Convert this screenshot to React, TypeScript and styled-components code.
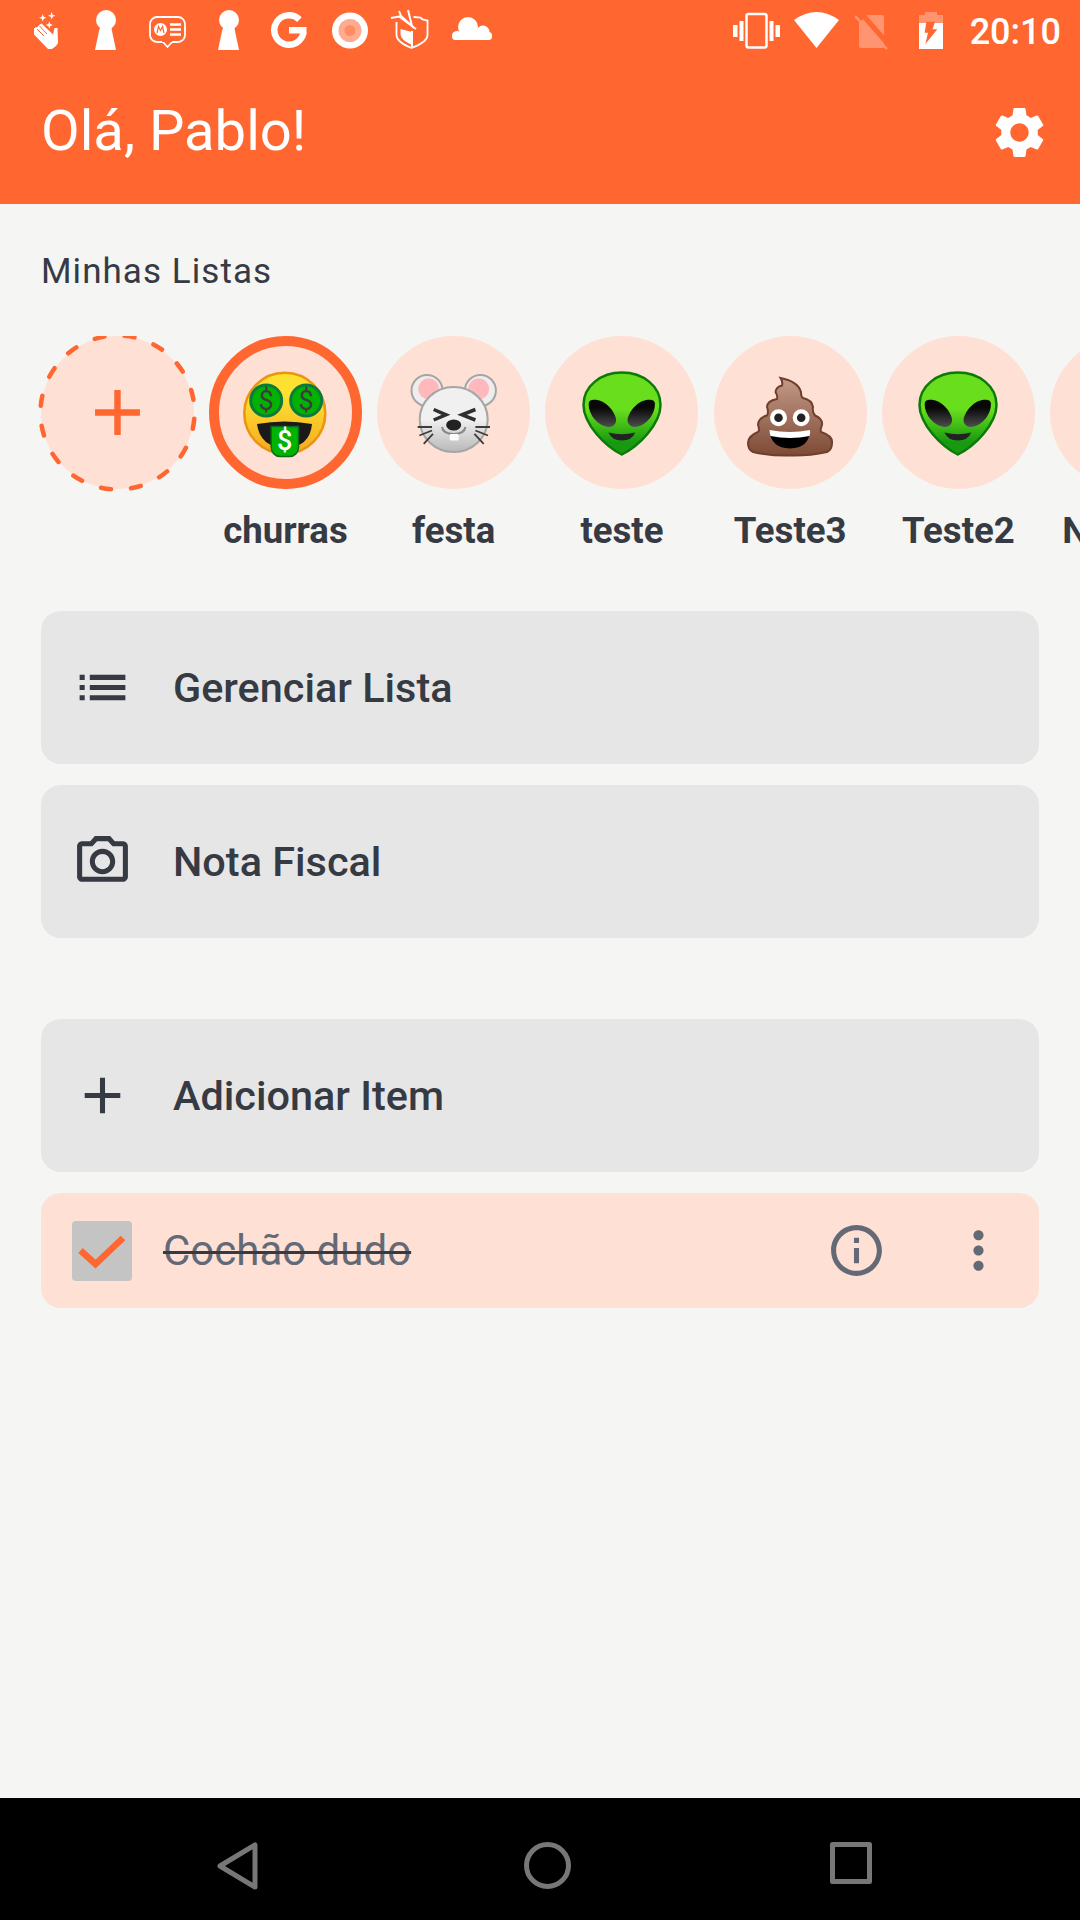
import React from "react";
import styled, { createGlobalStyle } from "styled-components";
import { MdSettings, MdList, MdOutlinePhotoCamera, MdAdd, MdInfoOutline, MdMoreVert } from "react-icons/md";

const Global = createGlobalStyle`
  html, body { margin: 0; padding: 0; background: #f5f5f3; }
  * { box-sizing: border-box; }
`;

const Page = styled.div`
  width: 1080px;
  height: 1920px;
  display: flex;
  flex-direction: column;
  overflow: hidden;
  background: #f5f5f3;
  font-family: Roboto, "Liberation Sans", sans-serif;
  color: #363a43;
`;

const Header = styled.header`
  height: 204px;
  flex: none;
  display: flex;
  flex-direction: column;
  background: #ff6630;
  color: #fff;
`;

const StatusBar = styled.div`
  height: 61px;
  flex: none;
  display: flex;
  justify-content: space-between;
  align-items: flex-start;
  padding: 9px 19px 0 34px;
`;

const StatusGroup = styled.div`
  display: flex;
  align-items: flex-start;
`;

const StatusIcon = styled.svg<{ $gap?: number }>`
  display: block;
  flex: none;
  height: 42px;
  margin-left: ${(p) => p.$gap ?? 0}px;
`;

const Clock = styled.span`
  margin: 2px 0 0 27px;
  font-size: 36px;
  font-weight: 500;
  line-height: 42px;
`;

const AppBar = styled.div`
  flex: 1;
  display: flex;
  align-items: center;
  justify-content: space-between;
  padding: 0 30px 4px 41px;
`;

const Title = styled.h1`
  margin: 0;
  font-size: 56.2px;
  font-weight: 400;
  line-height: 66px;
`;

const Main = styled.main`
  flex: 1;
  display: flex;
  flex-direction: column;
  min-height: 0;
`;

const SectionLabel = styled.div`
  margin: 49px 0 0 41px;
  font-size: 35px;
  line-height: 38px;
  letter-spacing: 1.05px;
`;

const ListRow = styled.div`
  display: flex;
  gap: 15.25px;
  margin-top: 45px;
  padding-left: 40.7px;
  overflow: hidden;
`;

const ListItem = styled.div`
  flex: none;
  width: 153px;
  display: flex;
  flex-direction: column;
  align-items: center;
  gap: 20px;
`;

const Bubble = styled.div<{ $selected?: boolean }>`
  position: relative;
  flex: none;
  width: 153px;
  height: 153px;
  display: flex;
  align-items: center;
  justify-content: center;
  border-radius: 50%;
  background: #ffe0d5;
  color: #ff6630;
  border: ${(p) => (p.$selected ? "10px solid #ff6630" : "none")};
`;

const DashedRing = styled.svg`
  position: absolute;
  left: -4px;
  top: -4px;
  width: 161px;
  height: 161px;
`;

const Emoji = styled.svg`
  display: block;
  flex: none;
  width: 90px;
  height: 90px;
`;

const ItemName = styled.span`
  height: 44px;
  font-size: 36.6px;
  font-weight: 700;
  line-height: 44px;
  white-space: nowrap;
`;

const Stack = styled.div<{ $top: number }>`
  display: flex;
  flex-direction: column;
  gap: 21px;
  margin: ${(p) => p.$top}px 41px 0;
`;

const ActionCard = styled.div`
  height: 153px;
  display: flex;
  align-items: center;
  padding-left: 31px;
  gap: 40px;
  border-radius: 20px;
  background: #e6e6e6;
  font-size: 41.4px;
  font-weight: 500;
`;

const ItemCard = styled.div`
  height: 115px;
  display: flex;
  align-items: center;
  padding: 0 30px 0 31px;
  border-radius: 20px;
  background: #ffe0d5;
  color: #646a75;
`;

const CheckBox = styled.div`
  width: 60px;
  height: 60px;
  flex: none;
  display: flex;
  align-items: center;
  justify-content: center;
  border-radius: 4px;
  background: #c4c4c4;
`;

const ItemText = styled.span`
  flex: 1;
  margin-left: 31px;
  font-size: 42px;
  text-decoration: line-through #363a43 3px;
`;

const ItemActions = styled.div`
  display: flex;
  gap: 61.5px;
`;

const NavBar = styled.nav`
  height: 122px;
  flex: none;
  display: flex;
  align-items: flex-start;
  padding: 44px 0 0 214px;
  background: #000;
`;

const NavIcon = styled.svg<{ $gap?: number }>`
  display: block;
  flex: none;
  margin-left: ${(p) => p.$gap ?? 0}px;
`;

const Gear = styled(MdSettings)`
  display: block;
  margin-top: 4px;
`;

const Clap = () => (
  <StatusIcon width="24" viewBox="0 0 24 42" fill="#fff">
    <path d="M8.7 5l1 2.7 2.7 1-2.7 1-1 2.7-1-2.7L5 8.7l2.7-1zM17.7 3l1 2.7 2.7 1-2.7 1-1 2.7-1-2.7-2.7-1 2.7-1zM15.3 12.3l1 2.7 2.7 1-2.7 1-1 2.7-1-2.7-2.7-1 2.7-1z" />
    <path d="M0 19.5l2-1.5 1 .5 2-2.5 2.5-1.5 11.5 11 1.5-6.5h3L24 34l-2 3-4 3h-4L0 25.5z" />
    <path d="M3 20l7 7M5.5 17l7.5 8" stroke="#ff6630" strokeWidth="1" fill="none" />
  </StatusIcon>
);

const Keyhole = ({ $gap }: { $gap: number }) => (
  <StatusIcon $gap={$gap} width="22" viewBox="0 0 22 42" fill="#fff">
    <circle cx="11" cy="11" r="10" />
    <path d="M6 16h10l1 6 4 19H0l4-19z" />
  </StatusIcon>
);

const MotoNote = () => (
  <StatusIcon $gap={32} width="37" viewBox="0 0 37 42" fill="none">
    <rect x="1" y="8" width="35" height="25" rx="7" stroke="#fff" strokeWidth="1.8" />
    <path d="M14 33l4.500 5 4.500-5" stroke="#fff" strokeWidth="1.8" fill="#ff6630" />
    <rect x="13" y="31" width="10" height="2" fill="#ff6630" />
    <circle cx="11.500" cy="20.500" r="6.500" fill="#fff" />
    <path d="M8 24l1.500-6.500 2 4 2-4L15 24" stroke="#ff6630" strokeWidth="1.200" />
    <path d="M21 15.500h11M21 20.500h11M21 25.500h11" stroke="#fff" strokeWidth="2.400" />
  </StatusIcon>
);

const GoogleG = () => (
  <StatusIcon $gap={31} width="36" viewBox="0 0 36 42" fill="none">
    <path d="M28.400 10.600A14.700 14.700 0 1 0 32.500 23.500" stroke="#fff" strokeWidth="6.500" />
    <rect x="18" y="18" width="17.500" height="6.500" fill="#fff" />
  </StatusIcon>
);

const RecordDot = () => (
  <StatusIcon $gap={25} width="36" viewBox="0 0 36 42">
    <circle cx="18" cy="21.500" r="18" fill="#fff" />
    <circle cx="18" cy="21.500" r="11.500" fill="#ffab8f" />
    <circle cx="18" cy="21.500" r="5.500" fill="#ff8c63" />
  </StatusIcon>
);

const ShieldArrows = () => (
  <StatusIcon $gap={22} width="39" viewBox="0 0 39 42" fill="none">
    <path d="M6.500 13v13q0 7 15 13q16-6 16-13V11.500l-5-1-2-2-7-.5" stroke="#fff" strokeWidth="1.800" />
    <path d="M10.500 20l11.500 3v13q-11.500-5-11.500-11z" fill="#fff" />
    <path d="M22 22v16" stroke="#fff" strokeWidth="2" />
    <path d="M1 9l8-1.500 17 12.500M9 2l2 5 13 12M18 1l4 16" stroke="#fff" strokeWidth="2" />
  </StatusIcon>
);

const Cloud = () => (
  <StatusIcon $gap={23} width="40" viewBox="0 0 40 42" fill="#fff">
    <circle cx="16" cy="18" r="10" />
    <circle cx="31" cy="23" r="6.500" />
    <circle cx="5" cy="26.500" r="4.500" />
    <rect x="0" y="23" width="40" height="8" rx="3.500" />
  </StatusIcon>
);

const Vibrate = () => (
  <StatusIcon width="47" viewBox="0 0 47 42" fill="#fff">
    <rect x="0" y="16" width="4.500" height="12" />
    <rect x="6.500" y="12" width="4" height="20" />
    <rect x="13.500" y="5" width="20" height="33.500" rx="2" fill="none" stroke="#fff" strokeWidth="2.500" />
    <rect x="36.500" y="12" width="4" height="20" />
    <rect x="42.500" y="16" width="4.500" height="12" />
  </StatusIcon>
);

const Wifi = () => (
  <StatusIcon $gap={14} width="45" viewBox="0 0 45 42" fill="#fff">
    <path d="M22.500 39L0 11Q22.500-5 45 11z" />
  </StatusIcon>
);

const SimOff = () => (
  <StatusIcon $gap={16} width="33" viewBox="0 0 33 42" fill="#ff9570">
    <path d="M12 6h15a2 2 0 0 1 2 2v29a2 2 0 0 1-2 2H6a2 2 0 0 1-2-2V14z" />
    <path d="M3 4l28 32" stroke="#ff6630" strokeWidth="5" transform="translate(3 0)" />
    <path d="M0 7l32 33" stroke="#ff9570" strokeWidth="2.500" />
  </StatusIcon>
);

const Battery = () => (
  <StatusIcon $gap={31} width="24" viewBox="0 0 24 42">
    <path d="M6 3h12v3h6v8H0V6h6z" fill="#ff9570" />
    <rect x="0" y="14" width="24" height="26" fill="#fff" />
    <path d="M7.400 12.700H16l-2.500 7.600h4.800L6.400 35 9 23.700H5.600z" fill="#ff6630" />
  </StatusIcon>
);

const MoneyFace = () => (
  <Emoji viewBox="0 0 90 90">
    <defs>
      <linearGradient id="moneySkin" x1="0" y1="0" x2="0" y2="1">
        <stop offset="0.3" stopColor="#fde030" />
        <stop offset="1" stopColor="#f6a821" />
      </linearGradient>
    </defs>
    <circle cx="44.800" cy="45.300" r="40.500" fill="url(#moneySkin)" stroke="#ea9410" strokeWidth="2.500" />
    <circle cx="26.200" cy="32.500" r="15.500" fill="#00b300" stroke="#0b7a3d" strokeWidth="3" />
    <circle cx="66.200" cy="32.500" r="15.500" fill="#00b300" stroke="#0b7a3d" strokeWidth="3" />
    <text x="26.200" y="42" textAnchor="middle" fontFamily="Roboto, sans-serif" fontSize="27" fill="#3c3c3c">$</text>
    <text x="66.200" y="42" textAnchor="middle" fontFamily="Roboto, sans-serif" fontSize="27" fill="#3c3c3c">$</text>
    <path d="M17 56Q44.500 51 72 56Q70 79 45 80Q20 79 17 56z" fill="#1a1a1a" />
    <path d="M31.200 58.500h27.300v21a9 9 0 0 1-9 9h-9.300a9 9 0 0 1-9-9z" fill="#00b300" stroke="#0a6b25" strokeWidth="1.500" />
    <text x="44.800" y="82" textAnchor="middle" fontFamily="Roboto, sans-serif" fontWeight="500" fontSize="27" fill="#fff">$</text>
  </Emoji>
);

const MouseFace = () => (
  <Emoji viewBox="0 0 90 90">
    <defs>
      <linearGradient id="mouseFur" x1="0" y1="0" x2="0" y2="1">
        <stop offset="0.5" stopColor="#f0f0f0" />
        <stop offset="1" stopColor="#b8b8b8" />
      </linearGradient>
    </defs>
    <circle cx="18" cy="22.500" r="15.500" fill="#eee" stroke="#a5a5a5" strokeWidth="2" />
    <circle cx="71.400" cy="22.500" r="15.500" fill="#eee" stroke="#a5a5a5" strokeWidth="2" />
    <circle cx="19.700" cy="20.800" r="10.500" fill="#ffb9bc" />
    <circle cx="69.700" cy="20.800" r="10.500" fill="#ffb9bc" />
    <ellipse cx="44.700" cy="51.500" rx="34" ry="32.500" fill="url(#mouseFur)" stroke="#a5a5a5" strokeWidth="2" />
    <path d="M24.700 41.500L37 46.800 24.700 52M66.400 41.500L53 46.800 66.400 52" fill="none" stroke="#2f2f2f" strokeWidth="3.500" />
    <path d="M33 59q1 7 11.700 7q10.700 0 11.700-7" fill="none" stroke="#8a8a8a" strokeWidth="2" />
    <rect x="40.700" y="66" width="9" height="6.500" rx="1.500" fill="#fff" />
    <ellipse cx="44.700" cy="57" rx="7.500" ry="5.500" fill="#222" />
    <path d="M8.700 59H23M10.400 67.500L23 62.500M14.700 75.800L24 65.800M66.400 59H81M66.400 62.500L79 67.500M65.400 65.800L74.700 75.800" stroke="#3c3c3c" strokeWidth="1.800" />
  </Emoji>
);

const AlienFace = ({ id }: { id: string }) => (
  <Emoji viewBox="0 0 90 90">
    <defs>
      <linearGradient id={`${id}Skin`} x1="0" y1="0" x2="0" y2="1">
        <stop offset="0.45" stopColor="#69de1c" />
        <stop offset="0.85" stopColor="#179a10" />
      </linearGradient>
      <linearGradient id={`${id}Eye`} x1="0" y1="0" x2="0" y2="1">
        <stop offset="0.3" stopColor="#080808" />
        <stop offset="1" stopColor="#4d4d4d" />
      </linearGradient>
    </defs>
    <path d="M44.800 4.500C66 4.500 83.500 18 83.500 37C83.500 56 62 78 44.800 86.500C28 78 6.500 56 6.500 37C6.500 18 24 4.500 44.800 4.500z" fill={`url(#${id}Skin)`} stroke="#0a7a0a" strokeWidth="2.500" />
    <path d="M11.700 36C11.700 32 15 31.500 19 31.800C28 32.500 37 42 39 50.800C39.500 56 36 59 32 59C22 58.500 11.700 48 11.700 36z" fill={`url(#${id}Eye)`} />
    <path d="M77.900 36C77.900 32 74.600 31.500 70.600 31.800C61.600 32.500 52.600 42 50.600 50.800C50.100 56 53.600 59 57.600 59C67.600 58.500 77.900 48 77.900 36z" fill={`url(#${id}Eye)`} />
    <path d="M31.400 64.500Q45 68 58.200 64.500Q55 72.500 45 72.500Q35 72.500 31.400 64.500z" fill="#222" />
  </Emoji>
);

const PoopFace = () => (
  <Emoji viewBox="0 0 90 90">
    <defs>
      <linearGradient id="poopFill" x1="0" y1="0" x2="0" y2="1">
        <stop offset="0" stopColor="#c49a88" />
        <stop offset="1" stopColor="#7d4a35" />
      </linearGradient>
    </defs>
    <path d="M35.500 10C46 12 54 17 56 24Q56 29 58 30Q67 32 68 39Q67 44 70 47.500Q78 51 77 57Q75 62 76 64Q88 68 87 75Q87 82 82 84Q64 88 45 87.500Q26 88 8 84Q3 82 3 75Q3 68 13 64Q15 62 13 57Q13 50 22 47.500Q24 44 22 39Q22 33 32 31Q33 28 30.500 24Q31 19 37 17.500Q38 14 35.500 10z" fill="url(#poopFill)" stroke="#6d3f2c" strokeWidth="2" />
    <circle cx="33.500" cy="49.800" r="8.500" fill="#fff" />
    <circle cx="56.200" cy="49.800" r="8.500" fill="#fff" />
    <circle cx="33.500" cy="49.800" r="4.300" fill="#222" />
    <circle cx="56.200" cy="49.800" r="4.300" fill="#222" />
    <path d="M24.500 63Q45 67 65 63Q64 80 45 80.500Q26 80 24.500 63z" fill="#000" />
    <path d="M24.500 62Q45 66 65 62Q65.500 65 64.500 68Q45 72 25.500 68Q24.300 65 24.500 62z" fill="#fff" />
  </Emoji>
);

const lists = [
  { name: "churras", selected: true, icon: <MoneyFace /> },
  { name: "festa", icon: <MouseFace /> },
  { name: "teste", icon: <AlienFace id="alienA" /> },
  { name: "Teste3", icon: <PoopFace /> },
  { name: "Teste2", icon: <AlienFace id="alienB" /> },
  { name: "Notinha" },
];

export default function App() {
  return (
    <Page>
      <Global />
      <Header>
        <StatusBar>
          <StatusGroup>
            <Clap />
            <Keyhole $gap={37} />
            <MotoNote />
            <Keyhole $gap={32} />
            <GoogleG />
            <RecordDot />
            <ShieldArrows />
            <Cloud />
          </StatusGroup>
          <StatusGroup>
            <Vibrate />
            <Wifi />
            <SimOff />
            <Battery />
            <Clock>20:10</Clock>
          </StatusGroup>
        </StatusBar>
        <AppBar>
          <Title>Olá, Pablo!</Title>
          <Gear size={61} color="#fff" />
        </AppBar>
      </Header>
      <Main>
        <SectionLabel>Minhas Listas</SectionLabel>
        <ListRow>
          <ListItem>
            <Bubble>
              <DashedRing viewBox="0 0 161 161" fill="none">
                <circle cx="80.500" cy="80.500" r="77" stroke="#ff6630" strokeWidth="4.500" strokeLinecap="round" strokeDasharray="10 20.250" strokeDashoffset="-6.400" />
              </DashedRing>
              <MdAdd size={77} />
            </Bubble>
          </ListItem>
          {lists.map((l) => (
            <ListItem key={l.name}>
              <Bubble $selected={l.selected}>{l.icon}</Bubble>
              <ItemName>{l.name}</ItemName>
            </ListItem>
          ))}
        </ListRow>
        <Stack $top={58}>
          <ActionCard>
            <MdList size={61} />
            Gerenciar Lista
          </ActionCard>
          <ActionCard>
            <MdOutlinePhotoCamera size={61} />
            Nota Fiscal
          </ActionCard>
        </Stack>
        <Stack $top={81}>
          <ActionCard>
            <MdAdd size={61} />
            Adicionar Item
          </ActionCard>
          <ItemCard>
            <CheckBox>
              <svg width="48" height="36" viewBox="0 0 48 36" fill="none">
                <path d="M2.500 17.500L17.500 31 45 5" stroke="#ff6630" strokeWidth="6.500" />
              </svg>
            </CheckBox>
            <ItemText>Cochão dudo</ItemText>
            <ItemActions>
              <MdInfoOutline size={61} />
              <MdMoreVert size={61} />
            </ItemActions>
          </ItemCard>
        </Stack>
      </Main>
      <NavBar>
        <NavIcon width="46" height="50" viewBox="0 0 46 50" fill="none" stroke="#777" strokeWidth="5" strokeLinejoin="round">
          <path d="M41 3v42L6 24z" />
        </NavIcon>
        <NavIcon $gap={264} width="47" height="47" viewBox="0 0 47 47" fill="none" stroke="#777" strokeWidth="5">
          <circle cx="23.500" cy="23.500" r="21" />
        </NavIcon>
        <NavIcon $gap={259} width="42" height="42" viewBox="0 0 42 42" fill="none" stroke="#777" strokeWidth="5" strokeLinejoin="round">
          <rect x="2.500" y="2.500" width="37" height="37" />
        </NavIcon>
      </NavBar>
    </Page>
  );
}
